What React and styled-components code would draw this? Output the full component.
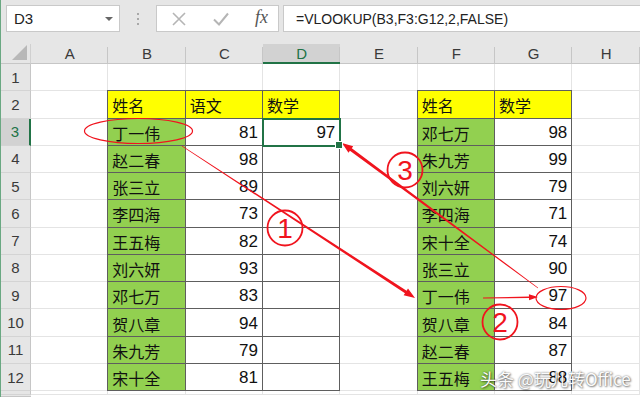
import React from "react";
import styled, { createGlobalStyle, css } from "styled-components";

const GlobalStyle = createGlobalStyle`
  body { margin: 0; background: #fff; overflow: hidden; }
  * { box-sizing: border-box; }
`;

const GREEN = "#217346";
const RED = "#f0141e";
const LINE = "#5e5e5e";

const Page = styled.div`
  position: relative;
  width: 640px;
  height: 397px;
  overflow: hidden;
  border-left: 1px solid #6aa882;
  font-family: "Liberation Sans", Arial, sans-serif;
  background: #fff;
`;

const TopBar = styled.div`
  display: flex;
  align-items: center;
  height: 44px;
  padding: 5px 0 12px 5px;
  background: #e6e6e6;
`;

const Box = styled.div`
  height: 27px;
  background: #fff;
  border: 1px solid #c9c9c9;
  display: flex;
  align-items: center;
`;

const NameBox = styled(Box)`
  width: 114px;
  padding: 0 6px 0 7px;
  justify-content: space-between;
  font-size: 15px;
  color: #222;
`;

const Caret = styled.span`
  width: 0;
  height: 0;
  border-left: 4px solid transparent;
  border-right: 4px solid transparent;
  border-top: 4px solid #666;
`;

const Dots = styled.div`
  width: 36px;
  display: flex;
  flex-direction: column;
  align-items: center;
  gap: 3px;
  span {
    width: 2px;
    height: 2px;
    background: #a8a8a8;
  }
`;

const FnBox = styled(Box)`
  width: 123px;
  padding: 0 10px 0 14px;
  justify-content: space-between;
`;

const Fx = styled.span`
  font-family: "Liberation Serif", serif;
  font-style: italic;
  font-size: 18px;
  color: #555;
  margin-top: -3px;
`;

const FormulaBox = styled(Box)`
  flex: 1;
  margin-left: 4px;
  padding-left: 12px;
  font-size: 14px;
  color: #222;
  border-right: none;
`;

const Sheet = styled.div`
  display: grid;
  grid-template-columns: 30px repeat(7, 77.33px) 1fr;
  grid-template-rows: 20px repeat(12, 27.27px) 1fr;
  height: 353px;
`;

const Corner = styled.div`
  background: #e6e6e6;
  border-right: 1px solid #d0d0d0;
  border-bottom: 1px solid #c6c6c6;
  position: relative;
  &::after {
    content: "";
    position: absolute;
    right: 3px;
    bottom: 3px;
    border-left: 15px solid transparent;
    border-bottom: 15px solid #b8b8b8;
  }
`;

const ColHead = styled.div`
  background: #e6e6e6;
  border-bottom: 1px solid #c6c6c6;
  display: flex;
  align-items: flex-end;
  justify-content: center;
  padding-bottom: 1px;
  font-size: 15px;
  color: #3a3a3a;
  position: relative;
  &::before {
    content: "";
    position: absolute;
    right: 0;
    top: 3px;
    bottom: 0;
    width: 1px;
    background: #c6c6c6;
  }
  ${(p) =>
    p.$active &&
    css`
      background: #d2d2d2;
      color: ${GREEN};
      border-bottom: 2px solid ${GREEN};
      padding-bottom: 0;
    `}
`;

const RowHead = styled.div`
  background: #e6e6e6;
  border-bottom: 1px solid #d4d4d4;
  border-right: 1px solid #c6c6c6;
  display: flex;
  align-items: center;
  justify-content: center;
  font-size: 15px;
  color: #3a3a3a;
  ${(p) =>
    p.$active &&
    css`
      background: #d2d2d2;
      color: ${GREEN};
      border-right: 2px solid ${GREEN};
    `}
`;

const Blank = styled.div`
  border-right: 1px solid #e4e4e4;
  border-bottom: 1px solid #e4e4e4;
`;

const Table = styled.div`
  grid-column: ${(p) => p.$col} / span ${(p) => p.$span};
  grid-row: 3 / span 11;
  margin: -1px 0 0 -1px;
  display: grid;
  grid-template-columns: repeat(${(p) => p.$span}, 1fr);
  grid-template-rows: repeat(11, 1fr);
  border-top: 1px solid ${LINE};
  border-left: 1px solid ${LINE};
  position: relative;
`;

const Cell = styled.div`
  border-right: 1px solid ${LINE};
  border-bottom: 1px solid ${LINE};
  display: flex;
  align-items: center;
  padding: 2px 4px 0 4px;
  background: ${(p) => (p.$kind === "head" ? "#ffff00" : p.$kind === "name" ? "#92d050" : "#fff")};
  justify-content: ${(p) => (p.$num ? "flex-end" : "flex-start")};
  font-family: ${(p) =>
    p.$num ? `"Liberation Sans", Arial, sans-serif` : `"Noto Sans CJK SC", "Noto Sans", sans-serif`};
  font-size: ${(p) => (p.$num ? "17px" : "16px")};
  color: #111;
  position: relative;
  ${(p) =>
    p.$selected &&
    css`
      outline: 2px solid ${GREEN};
      outline-offset: -1px;
      z-index: 1;
      &::after {
        content: "";
        position: absolute;
        right: -4px;
        bottom: -4px;
        width: 6px;
        height: 6px;
        background: ${GREEN};
        border: 1px solid #fff;
      }
    `}
`;

const Overlay = styled.svg`
  position: absolute;
  left: 0;
  top: 0;
  pointer-events: none;
`;

const Watermark = styled.div`
  position: absolute;
  left: 479px;
  top: 366px;
  font-family: "Noto Sans CJK SC", "Liberation Sans", sans-serif;
  font-size: 17px;
  color: #fafafa;
  text-shadow: 0 0 2px rgba(0, 0, 0, 0.55), 1px 1px 2px rgba(0, 0, 0, 0.45);
  white-space: nowrap;
`;

const left = [
  ["姓名", "语文", "数学"],
  ["丁一伟", 81, 97],
  ["赵二春", 98, ""],
  ["张三立", 89, ""],
  ["李四海", 73, ""],
  ["王五梅", 82, ""],
  ["刘六妍", 93, ""],
  ["邓七万", 83, ""],
  ["贺八章", 94, ""],
  ["朱九芳", 79, ""],
  ["宋十全", 81, ""],
];

const right = [
  ["姓名", "数学"],
  ["邓七万", 98],
  ["朱九芳", 99],
  ["刘六妍", 79],
  ["李四海", 71],
  ["宋十全", 74],
  ["张三立", 90],
  ["丁一伟", 97],
  ["贺八章", 84],
  ["赵二春", 87],
  ["王五梅", 88],
];

const cols = ["A", "B", "C", "D", "E", "F", "G", "H"];

function arrow(x1, y1, x2, y2, w1, w2, hl, hw) {
  const L = Math.hypot(x2 - x1, y2 - y1);
  const ux = (x2 - x1) / L, uy = (y2 - y1) / L;
  const nx = -uy, ny = ux;
  const bx = x2 - ux * hl, by = y2 - uy * hl;
  const pts = [
    [x1 + (nx * w1) / 2, y1 + (ny * w1) / 2],
    [bx + (nx * w2) / 2, by + (ny * w2) / 2],
    [bx + (nx * hw) / 2, by + (ny * hw) / 2],
    [x2, y2],
    [bx - (nx * hw) / 2, by - (ny * hw) / 2],
    [bx - (nx * w2) / 2, by - (ny * w2) / 2],
    [x1 - (nx * w1) / 2, y1 - (ny * w1) / 2],
  ];
  return pts.map((p) => p.map((v) => v.toFixed(1)).join(",")).join(" ");
}

const Circled = ({ x, y, n }) => (
  <g>
    <circle cx={x} cy={y} r="17.5" fill="none" stroke={RED} strokeWidth="1.8" />
    <text
      x={x}
      y={y + 10}
      textAnchor="middle"
      fontSize="28"
      fill={RED}
      fontFamily="Liberation Sans, sans-serif"
    >
      {n}
    </text>
  </g>
);

const renderTable = (rows, selected) =>
  rows.map((r, ri) =>
    r.map((v, ci) => {
      const kind = ri === 0 ? "head" : ci === 0 ? "name" : "val";
      return (
        <Cell
          key={ri + "-" + ci}
          $kind={kind}
          $num={kind === "val"}
          $selected={selected && selected[0] === ri && selected[1] === ci}
        >
          {v}
        </Cell>
      );
    })
  );

const App = () => {
  const blanks = [];
  for (let r = 1; r <= 13; r++) {
    for (let c = 0; c < 8; c++) {
      blanks.push(<Blank key={r + cols[c]} style={{ gridRow: r + 1, gridColumn: c + 2 }} />);
    }
  }
  return (
    <Page>
      <GlobalStyle />
      <TopBar>
        <NameBox>
          D3
          <Caret />
        </NameBox>
        <Dots>
          <span />
          <span />
          <span />
        </Dots>
        <FnBox>
          <svg width="16" height="16" viewBox="0 0 16 16">
            <path d="M2 2 L14 14 M14 2 L2 14" stroke="#b5b5b5" strokeWidth="1.6" fill="none" />
          </svg>
          <svg width="18" height="16" viewBox="0 0 18 16">
            <path d="M2 8.5 L7 13.5 L16 2.5" stroke="#b5b5b5" strokeWidth="2" fill="none" />
          </svg>
          <Fx>fx</Fx>
        </FnBox>
        <FormulaBox>=VLOOKUP(B3,F3:G12,2,FALSE)</FormulaBox>
      </TopBar>
      <Sheet>
        <Corner />
        {cols.map((c) => (
          <ColHead key={c} $active={c === "D"}>
            {c}
          </ColHead>
        ))}
        <ColHead />
        {Array.from({ length: 13 }, (_, i) => (
          <RowHead key={i} $active={i === 2} style={{ gridRow: i + 2, gridColumn: 1 }}>
            {i < 12 ? i + 1 : ""}
          </RowHead>
        ))}
        {blanks}
        <Table $col={3} $span={3}>
          {renderTable(left, [1, 2])}
        </Table>
        <Table $col={7} $span={2}>
          {renderTable(right)}
        </Table>
      </Sheet>
      <Overlay width="640" height="397" viewBox="0 0 640 397">
        <ellipse cx="137.5" cy="131" rx="54" ry="12.5" fill="none" stroke={RED} strokeWidth="1.2" />
        <ellipse cx="560" cy="298" rx="25" ry="11.5" fill="none" stroke={RED} strokeWidth="1.2" />
        <polygon points={arrow(181, 146, 414, 298, 0.8, 3, 11, 8)} fill={RED} />
        <polygon points={arrow(537, 288, 341, 143, 0.8, 3.2, 11, 8)} fill={RED} />
        <polygon points={arrow(482, 298, 537, 297, 1, 1.4, 9, 6)} fill={RED} />
        <Circled x={284} y={228} n="1" />
        <Circled x={499} y={322} n="2" />
        <Circled x={404} y={170} n="3" />
      </Overlay>
      <Watermark>头条 @玩儿转Office</Watermark>
    </Page>
  );
};

export default App;
